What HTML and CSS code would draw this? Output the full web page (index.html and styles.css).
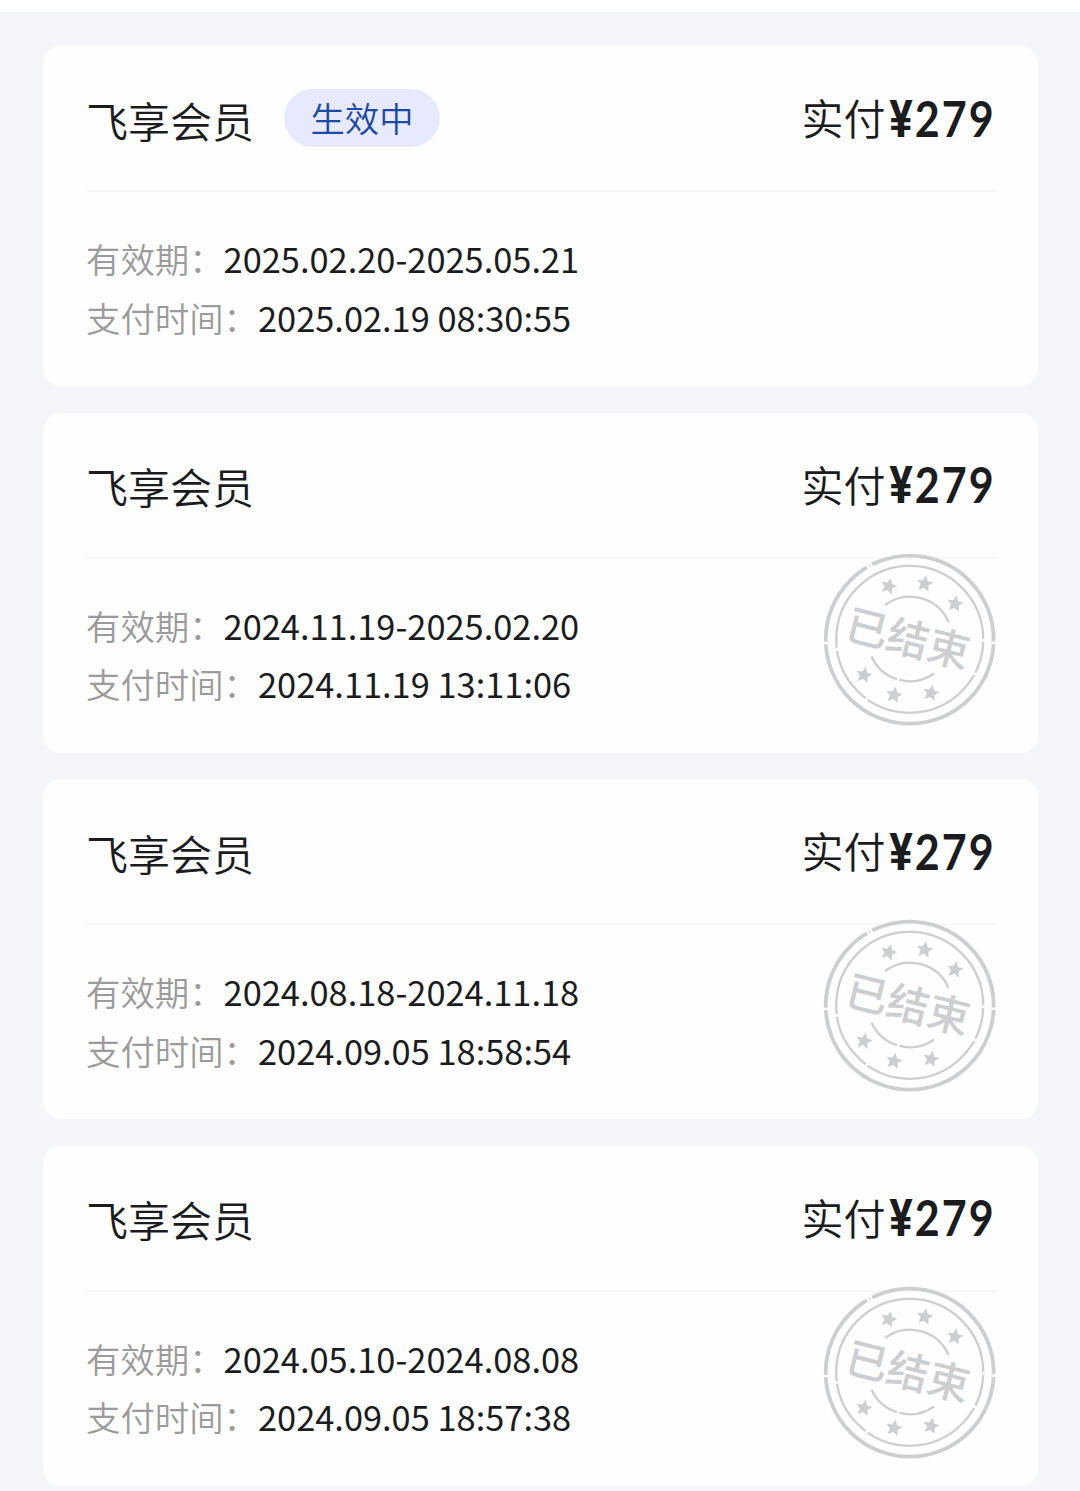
FILE: index.html
```
<!DOCTYPE html>
<html lang="zh-CN">
<head>
    <meta charset="UTF-8">
    <title>飞享会员</title>
    <link rel="stylesheet" href="styles.css">
</head>
<body>
    <svg width="0" height="0" class="defs">
        <defs>
            <path id="star" d="M0 -8.5 L2.5 -3 L8.2 -2.6 L3.9 1.3 L5.2 7.2 L0 4.1 L-5.2 7.2 L-3.9 1.3 L-8.2 -2.6 L-2.5 -3 Z"/>
            <g id="stamp">
                <circle class="ring-outer" cx="85.7" cy="85.7" r="84"/>
                <circle class="ring-inner" cx="85.7" cy="85.3" r="73.5"/>
                <path class="arc" d="M61 51 A42 42 0 0 1 124.5 68"/>
                <path class="arc" d="M47.5 102.5 A42 42 0 0 0 110 119.5"/>
                <path class="nick" d="M43 11 L48 19 M46 9 L50 16 M10 96 L15 95 M154 88 L161 86 M148 119 L154 121 M-1 89 L4 89 M168 89 L173 88 M41 147 L45 142 M73 128 L75 124"/>
                <use href="#star" transform="translate(64.7 32.3) rotate(16)"/>
                <use href="#star" transform="translate(100.7 29.7) rotate(10)"/>
                <use href="#star" transform="translate(131 49.7) rotate(10)"/>
                <use href="#star" transform="translate(40 121) rotate(12)"/>
                <use href="#star" transform="translate(70 141) rotate(12)"/>
                <use href="#star" transform="translate(107 139) rotate(12)"/>
                <text class="stamp-text" x="84" y="100" text-anchor="middle" transform="rotate(14 84 85)">已结束</text>
            </g>
        </defs>
    </svg>

    <div class="page">
        <div class="card">
            <div class="card-header">
                <span class="title">飞享会员</span>
                <span class="badge">生效中</span>
                <div class="paid"><span class="paid-label">实付</span><span class="amount"><span class="yen">¥</span>279</span></div>
            </div>
            <div class="card-body">
                <div class="row"><span class="label">有效期：</span>2025.02.20-2025.05.21</div>
                <div class="row"><span class="label">支付时间：</span>2025.02.19 08:30:55</div>
            </div>
        </div>

        <div class="card">
            <div class="card-header">
                <span class="title">飞享会员</span>
                <div class="paid"><span class="paid-label">实付</span><span class="amount"><span class="yen">¥</span>279</span></div>
            </div>
            <div class="card-body">
                <div class="row"><span class="label">有效期：</span>2024.11.19-2025.02.20</div>
                <div class="row"><span class="label">支付时间：</span>2024.11.19 13:11:06</div>
            </div>
            <svg class="stamp" viewBox="0 0 172 172"><use href="#stamp"/></svg>
        </div>

        <div class="card">
            <div class="card-header">
                <span class="title">飞享会员</span>
                <div class="paid"><span class="paid-label">实付</span><span class="amount"><span class="yen">¥</span>279</span></div>
            </div>
            <div class="card-body">
                <div class="row"><span class="label">有效期：</span>2024.08.18-2024.11.18</div>
                <div class="row"><span class="label">支付时间：</span>2024.09.05 18:58:54</div>
            </div>
            <svg class="stamp" viewBox="0 0 172 172"><use href="#stamp"/></svg>
        </div>

        <div class="card">
            <div class="card-header">
                <span class="title">飞享会员</span>
                <div class="paid"><span class="paid-label">实付</span><span class="amount"><span class="yen">¥</span>279</span></div>
            </div>
            <div class="card-body">
                <div class="row"><span class="label">有效期：</span>2024.05.10-2024.08.08</div>
                <div class="row"><span class="label">支付时间：</span>2024.09.05 18:57:38</div>
            </div>
            <svg class="stamp" viewBox="0 0 172 172"><use href="#stamp"/></svg>
        </div>
    </div>
</body>
</html>
```
FILE: styles.css
```
* {
    box-sizing: border-box;
}
body {
    margin: 0;
    height: 1491px;
    overflow: hidden;
    border-top: 12px solid #fff;
    background-color: #f5f6fa;
    font-family: "Noto Sans CJK SC", sans-serif;
    font-weight: 350;
    color: #1b1c1e;
}
.defs {
    display: block;
}
.page {
    display: flex;
    flex-direction: column;
    gap: 26.6px;
    padding: 34px 42px 0 43px;
}
.card {
    position: relative;
    height: 340px;
    flex-shrink: 0;
    padding: 0 42px 0 43px;
    background-color: #fefefe;
    border-radius: 18px;
}
.card-header {
    display: flex;
    align-items: center;
    height: 146px;
    border-bottom: 2px solid #f7f7f8;
}
.title {
    padding-top: 3px;
    font-size: 42px;
    line-height: 60px;
}
.badge {
    margin-left: 30px;
    width: 156px;
    height: 58px;
    border-radius: 29px;
    background-color: #e7eafd;
    color: #1c4ba3;
    font-size: 34.3px;
    line-height: 57px;
    text-align: center;
}
.paid {
    display: flex;
    align-items: center;
    margin-left: auto;
    line-height: 60px;
}
.paid-label {
    margin-right: -13px;
    padding-bottom: 2px;
    font-size: 42px;
}
.amount {
    padding-top: 1px;
    font-family: Lato, sans-serif;
    font-size: 50px;
    font-weight: 700;
    letter-spacing: 2.3px;
    transform: scaleX(0.86);
    transform-origin: right;
}
.yen {
    font-family: Roboto, sans-serif;
    font-size: 51px;
}
.card-body {
    padding-top: 37px;
}
.row {
    font-size: 34.4px;
    font-weight: 400;
    line-height: 58.5px;
    white-space: pre;
}
.label {
    color: #9b9b9b;
    font-weight: 350;
}
.stamp {
    position: absolute;
    top: 141px;
    right: 42px;
    width: 172px;
    height: 172px;
    overflow: visible;
    fill: #cdced0;
}
.ring-outer,
.ring-inner,
.arc,
.nick {
    fill: none;
    stroke: #cdced0;
}
.ring-outer {
    stroke-width: 3.8;
}
.ring-inner,
.arc {
    stroke-width: 2.3;
}
.nick {
    stroke: #fefefe;
    stroke-width: 2.5;
}
.stamp-text {
    font-size: 42px;
    font-weight: 500;
}
```
